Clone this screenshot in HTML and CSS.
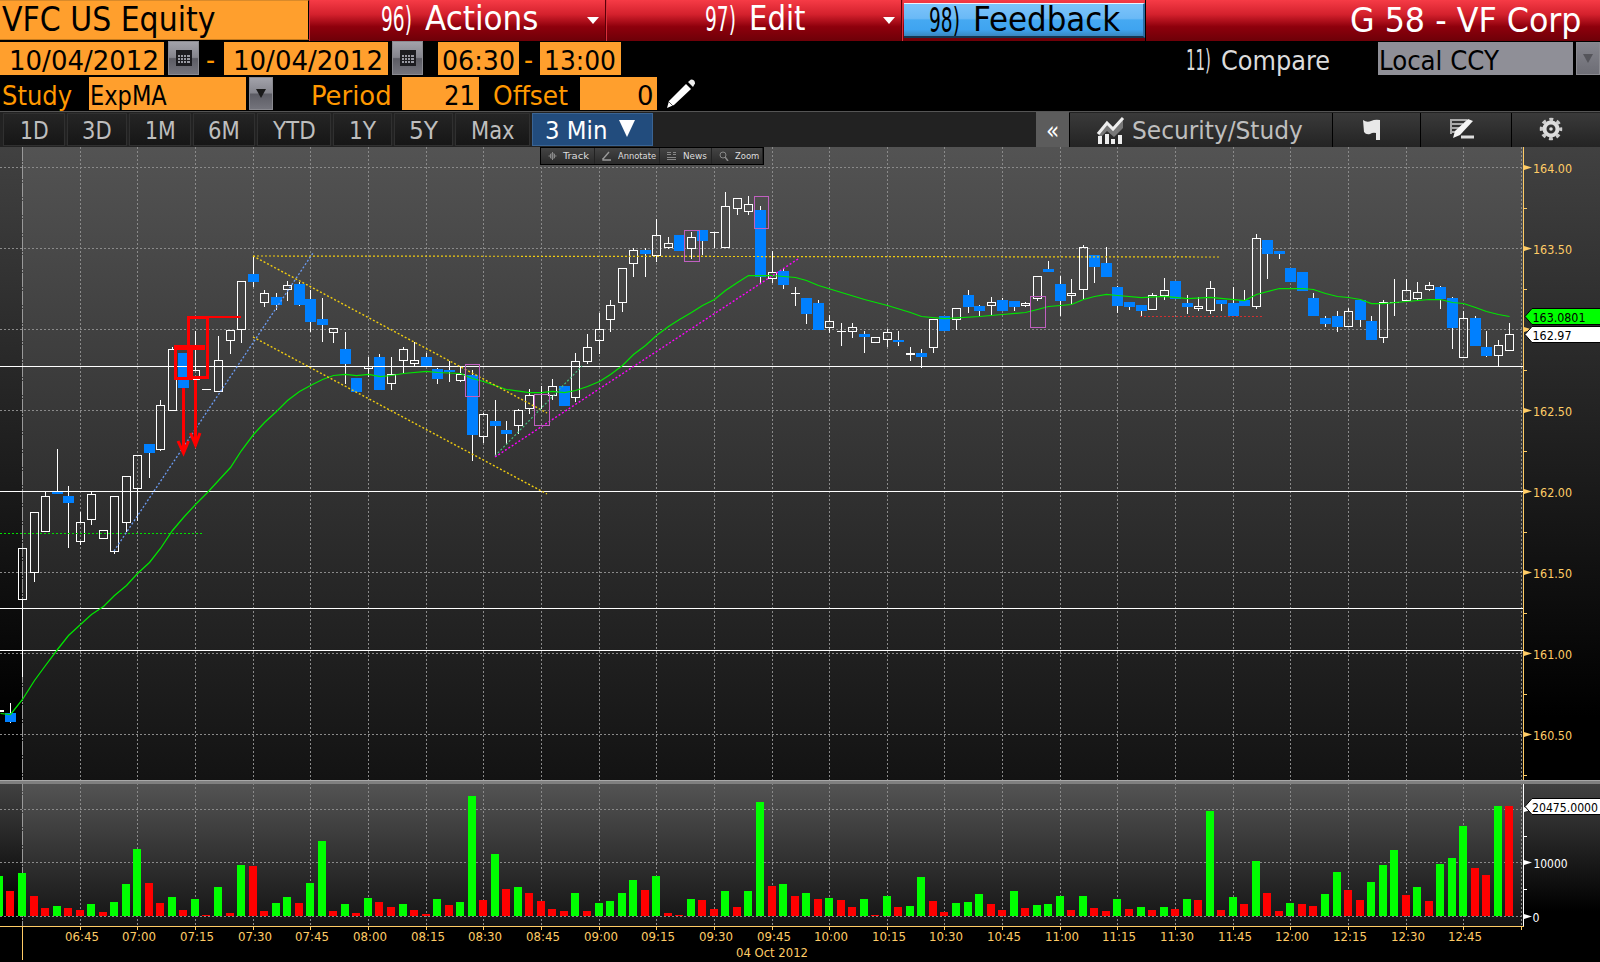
FILE: index.html
```html
<!DOCTYPE html>
<html lang="en">
<head>
    <meta charset="UTF-8">
    <title>VFC US Equity - G 58</title>
    <link rel="stylesheet" href="styles.css">
</head>
<body>
    <div class="title-row">
        <div class="security"><span class="fit" data-w="213">VFC US Equity</span></div>
        <div class="menu menu-actions">
            <span class="fit num" data-w="31">96)</span><span class="fit" data-w="113">Actions</span><i class="caret"></i>
        </div>
        <div class="menu menu-edit">
            <span class="fit num" data-w="31">97)</span><span class="fit" data-w="57">Edit</span><i class="caret"></i>
        </div>
        <div class="menu menu-feedback">
            <div class="feedback"><span class="fit num" data-w="31">98)</span><span class="fit" data-w="147">Feedback</span></div>
        </div>
        <div class="page-name"><span class="fit" data-w="232">G 58 - VF Corp</span></div>
    </div>

    <div class="form-row">
        <div class="field date"><span class="fit" data-w="150">10/04/2012</span></div>
        <div class="btn cal"><svg width="18" height="18"><use href="#cal"/></svg></div>
        <span class="dash">-</span>
        <div class="field date"><span class="fit" data-w="150">10/04/2012</span></div>
        <div class="btn cal"><svg width="18" height="18"><use href="#cal"/></svg></div>
        <div class="field time first"><span class="fit" data-w="73">06:30</span></div>
        <span class="dash small">-</span>
        <div class="field time"><span class="fit" data-w="72">13:00</span></div>
        <div class="compare"><span class="fit num" data-w="25">11)</span><span class="fit" data-w="109">Compare</span></div>
        <div class="field ccy"><span class="fit" data-w="120">Local CCY</span></div>
        <div class="btn ccy-drop"><i class="drop"></i></div>
    </div>

    <div class="form-row study-row">
        <span class="name"><span class="fit" data-w="70">Study</span></span>
        <div class="field study"><span class="fit" data-w="77">ExpMA</span></div>
        <div class="btn study-drop"><i class="drop"></i></div>
        <span class="name period-name"><span class="fit" data-w="81">Period</span></span>
        <div class="field number"><span class="fit" data-w="31">21</span></div>
        <span class="name offset-name"><span class="fit" data-w="75">Offset</span></span>
        <div class="field number"><span class="fit" data-w="16">0</span></div>
        <svg class="pencil" width="32" height="32" viewBox="0 0 32 32">
            <path d="M2 30l2-7L21 6l5 5L9 27z" fill="#fff"/>
            <path d="M23 4l3-2.500q4 0 4 4L28 9z" fill="#eee"/>
            <path d="M4 24l4 4" stroke="#555" stroke-width="1"/>
        </svg>
    </div>

    <div class="toolbar">
        <div class="range r1"><span class="fit" data-w="29">1D</span></div>
        <div class="range r2"><span class="fit" data-w="30">3D</span></div>
        <div class="range r3"><span class="fit" data-w="31">1M</span></div>
        <div class="range r4"><span class="fit" data-w="32">6M</span></div>
        <div class="range r5"><span class="fit" data-w="43">YTD</span></div>
        <div class="range r6"><span class="fit" data-w="27">1Y</span></div>
        <div class="range r7"><span class="fit" data-w="29">5Y</span></div>
        <div class="range r8"><span class="fit" data-w="44">Max</span></div>
        <div class="range active"><span class="fit" data-w="62">3 Min</span><i class="big-caret"></i></div>
        <div class="collapse">«</div>
        <div class="tool sec">
            <svg width="30" height="28" viewBox="0 0 30 28">
                <path d="M3 17L11 7l6 6L27 2v9l-9 9-7-6-7 7z" fill="#777"/>
                <path d="M2 17L11 6l6 6L27 1" fill="none" stroke="#eee" stroke-width="3"/>
                <path d="M4 19v8M11 17v10M17 22v5M24 18v9" stroke="#eee" stroke-width="4"/>
            </svg>
            <span class="fit" data-w="171">Security/Study</span>
        </div>
        <div class="tool flag">
            <svg width="22" height="24" viewBox="0 0 22 24">
                <path d="M2 2q4 3 8 1 4-2 9-1v20h-4v-7q-3-1-6 1-4 1-6-2z" fill="#e8e8e8"/>
            </svg>
        </div>
        <div class="tool note">
            <svg width="28" height="24" viewBox="0 0 28 24">
                <path d="M2 3h17M2 7h13M2 11h10M2 15h6M3 2v15" stroke="#aaa" stroke-width="2"/>
                <path d="M5 21l2-7L20 2l5 2-13 14z" fill="#f4f4f4"/>
                <path d="M13 20h13" stroke="#ddd" stroke-width="3"/>
            </svg>
        </div>
        <div class="tool gear">
            <svg width="24" height="24" viewBox="-12 -12 24 24">
                <circle r="6.500" fill="none" stroke="#ddd" stroke-width="4"/>
                <circle r="9.500" fill="none" stroke="#ccc" stroke-width="3.500" stroke-dasharray="3.900 3.560" stroke-dashoffset="1.950"/>
                <circle r="1.800" fill="#ddd"/>
            </svg>
        </div>
    </div>

    <div class="chart-wrap">
        <svg id="chart" width="1600" height="815" viewBox="0 147 1600 815">
            <defs>
                <linearGradient id="plotBg" x1="0" y1="0" x2="0" y2="1">
                    <stop offset="0" stop-color="#535353"/><stop offset="1" stop-color="#131313"/>
                </linearGradient>
                <linearGradient id="sideBg" x1="0" y1="0" x2="0" y2="1">
                    <stop offset="0" stop-color="#414141"/><stop offset="0.900" stop-color="#000"/>
                </linearGradient>
                <symbol id="cal" viewBox="0 0 18 18">
                    <path d="M1 1h16v16H1z" fill="#1c1c20"/>
                    <path d="M3 6h2v2H3zM6 6h2v2H6zM9 6h2v2H9zM12 6h3v2h-3zM3 9h2v2H3zM6 9h2v2H6zM9 9h2v2H9zM12 9h3v2h-3zM3 12h2v2H3zM6 12h2v2H6zM9 12h2v2H9zM12 12h3v2h-3z" fill="#999aa2"/>
                </symbol>
            </defs>
        </svg>
        <div class="mini-bar">
            <div class="mini m1">
                <svg width="9" height="10" viewBox="0 0 9 10"><path d="M4.500 1v8M0.500 5h8M2.500 3h4v4h-4z" fill="none" stroke="#888"/></svg>
                <span class="fit" data-w="26">Track</span>
            </div>
            <div class="mini m2">
                <svg width="10" height="10" viewBox="0 0 10 10"><path d="M1 8l6-7M3 9h6M1 7v2h2" fill="none" stroke="#999" stroke-width="1.400"/></svg>
                <span class="fit" data-w="38">Annotate</span>
            </div>
            <div class="mini m3">
                <svg width="10" height="10" viewBox="0 0 10 10"><path d="M0 1.500h4M0 3.500h4M6 1.500h3M6 3.500h3M0 6.500h9M0 8.500h9" stroke="#888"/></svg>
                <span class="fit" data-w="24">News</span>
            </div>
            <div class="mini m4">
                <svg width="10" height="10" viewBox="0 0 10 10"><circle cx="4" cy="4" r="3" fill="none" stroke="#888"/><path d="M6 6l3 4" stroke="#888" stroke-width="1.500"/></svg>
                <span class="fit" data-w="24">Zoom</span>
            </div>
        </div>
    </div>
    <script src="chart.js"></script>
</body>
</html>
```

FILE: styles.css
```css
* { box-sizing: border-box; }
body { margin: 0; width: 1600px; height: 962px; overflow: hidden; background: #000; font-family: "DejaVu Sans Condensed", "DejaVu Sans", sans-serif; font-stretch: condensed; }
.fit { display: inline-block; white-space: nowrap; flex: none; }
.fit b { display: inline-block; font-weight: normal; transform-origin: 0 50%; }

/* title row */
.title-row { display: flex; height: 41px; font-size: 33px; line-height: 38px; color: #fff; }
.security { width: 309px; height: 40px; padding: 0 0 0 2px; background: #ff9f2d; color: #000; border-top: 1px solid #d98a2a; border-bottom: 1px solid #c57a1e; border-right: 1px solid #000; }
.menu, .page-name { display: flex; height: 41px; background: linear-gradient(#f63b46, #d4212d 35%, #8e000c 65%, #6e0008); }
.menu { position: relative; border-right: 1px solid #5a0008; border-left: 1px solid #d8303b; }
.menu .num { margin-right: 13px; font-size: 34px; }
.menu-actions { width: 297px; padding-left: 71px; }
.menu-edit { width: 296px; padding-left: 98px; }
.menu-feedback { width: 244px; padding: 3px 0 0 1px; border-right: 1px solid #000; }
.feedback { display: flex; width: 241px; height: 35px; padding-left: 25px; line-height: 32px; color: #000; background: linear-gradient(#7cc4fa, #6ab9f6 45%, #45a9f2 50%, #3fa4f0 80%, #3a86be); border-top: 1px solid #e8f4ff; border-bottom: 2px solid #14344f; border-right: 2px solid #2c6ca0; }
.page-name { width: 454px; padding: 2px 18px 0 0; justify-content: flex-end; }
.caret { margin: 17px 6px 0 auto; width: 0; height: 0; border: 6px solid transparent; border-top: 7px solid #fff; border-bottom: 0; }

/* date and study rows */
.form-row { display: flex; height: 35px; padding-top: 1px; font-size: 27px; line-height: 37px; color: #000; }
.field { display: flex; height: 33px; background: #ff9f2d; }
.date { width: 164px; padding-left: 9px; }
.btn { display: flex; align-items: center; justify-content: center; height: 34px; background: linear-gradient(#a2a2aa, #85858d 48%, #5c5c64 52%, #74747c); border: 1px solid #8a8a90; }
.cal { width: 31px; margin: -1px 0 0 4px; }
.dash { width: 25px; padding-left: 7px; color: #ff9800; font-size: 28px; }
.dash.small { width: 21px; padding-left: 5px; }
.time { width: 81px; padding-left: 4px; }
.time.first { margin-left: 15px; }
.compare { display: flex; width: 192px; margin-left: 565px; color: #dcdcdc; }
.compare .num { margin-right: 10px; font-size: 28px; }
.ccy { width: 195px; padding-left: 1px; background: #8f8f97; }
.ccy-drop { width: 24px; height: 33px; margin-left: 3px; background: linear-gradient(#85858d, #6d6d75); }
.drop { width: 0; height: 0; border: 5px solid transparent; border-top: 9px solid #1a1a1a; border-bottom: 0; }
.ccy-drop .drop { border-top-color: #55555b; }
.name { display: flex; width: 89px; padding-left: 2px; color: #ff9800; }
.study { width: 157px; padding-left: 1px; }
.study-drop { width: 24px; height: 33px; margin-left: 3px; }
.period-name { width: 91px; margin-left: 38px; padding-left: 0; }
.number { width: 77px; padding-right: 4px; justify-content: flex-end; }
.offset-name { width: 87px; margin-left: 14px; padding-left: 0; }
.pencil { margin: 1px 0 0 8px; }

/* range toolbar */
.toolbar { display: flex; height: 36px; padding: 1px 0 0 3px; background: #222; border-top: 1px solid #555; font-size: 25px; line-height: 33px; color: #bebebe; }
.range { display: flex; justify-content: center; height: 33px; margin-right: 2px; background: linear-gradient(#252525, #161616); border: 1px solid #303030; }
.r1 { width: 62px; }
.r2 { width: 60px; }
.r3 { width: 62px; }
.r4 { width: 62px; }
.r5 { width: 74px; }
.r6 { width: 59px; }
.r7 { width: 59px; }
.r8 { width: 75px; }
.active { width: 121px; justify-content: flex-start; padding-left: 12px; background: #224c7d; border-color: #3a6494; color: #fff; }
.big-caret { margin: 6px 0 0 12px; width: 0; height: 0; border: 8px solid transparent; border-top: 17px solid #fff; border-bottom: 0; }
.collapse { width: 33px; height: 36px; margin: -1px 0 0 auto; padding-top: 3px; background: #5c5c5c; color: #fff; text-align: center; font-size: 24px; }
.tool { display: flex; align-items: center; justify-content: center; height: 35px; background: linear-gradient(#3a3a3a, #232323); border-left: 1px solid #000; }
.sec { width: 263px; justify-content: flex-start; padding-left: 26px; }
.sec .fit { margin-left: 6px; }
.flag { width: 88px; padding: 0 10px 2px 0; }
.note { width: 91px; padding: 0 8px 3px 0; }
.gear { width: 89px; padding: 0 10px 3px 0; }

/* chart */
.chart-wrap { position: relative; height: 815px; }
#chart { display: block; }
#chart text { font-size: 13px; }
.mini-bar { position: absolute; left: 540px; top: 0; display: flex; width: 224px; height: 18px; padding: 1px; background: #000; font-size: 9px; line-height: 15px; color: #ddd; }
.mini { display: flex; align-items: center; height: 16px; background: linear-gradient(#444, #2a2a2a); border-right: 1px solid #222; padding-left: 7px; }
.mini .fit { margin-left: 6px; }
.m1 { width: 54px; }
.m2 { width: 65px; }
.m3 { width: 52px; }
.m4 { width: 51px; }
```

FILE: chart.js
```js
const NS = "http://www.w3.org/2000/svg";
const chart = document.getElementById("chart");

function add(tag, attrs, text) {
    const el = document.createElementNS(NS, tag);
    for (const k in attrs) el.setAttribute(k, attrs[k]);
    if (text) el.textContent = text;
    chart.appendChild(el);
    return el;
}
function rect(x, y, w, h, fill) { add("rect", { x, y, width: w, height: h, fill }); }
function line(x1, y1, x2, y2, stroke, dash, w) {
    add("line", { x1, y1, x2, y2, stroke, "stroke-width": w || 1, "stroke-dasharray": dash || "none" });
}
function label(x, y, w, text, fill) {
    add("text", { x, y, fill, textLength: w, lengthAdjust: "spacingAndGlyphs" }, text);
}
function barX(i) { return Math.round(22 + 11.531 * i); }

// [colour, high, body top, body bottom, low], one per 3 minutes from 06:27
const candles = [
    ["b",703,713,722,723],["w",548,548,600,677],["w",512,512,573,582],["w",492,496,532,532],["b",449,492,494,494],
    ["b",486,496,503,548],["w",512,522,542,545],["w",492,494,520,525],["w",530,530,539,539],["w",496,496,552,554],
    ["w",476,476,523,532],["w",455,455,489,521],["b",444,444,453,478],["w",400,405,450,451],["w",347,349,411,411],
    ["b",353,353,388,388],["w",331,370,380,380],["w",389,389,390,390],["w",336,360,392,392],["w",330,330,341,354],
    ["w",281,281,330,343],["b",256,274,282,287],["w",290,293,303,307],["b",293,297,305,310],["w",281,285,290,301],
    ["b",282,284,305,306],["b",290,299,322,332],["b",298,319,325,342],["w",328,328,333,343],["b",332,349,364,384],
    ["b",378,378,392,392],["w",357,366,369,377],["b",354,357,390,390],["w",357,374,384,390],["w",347,349,361,374],
    ["w",342,360,364,366],["b",353,357,366,366],["b",368,369,379,384],["b",361,370,372,382],["w",366,374,381,382],
    ["b",370,375,435,461],["w",413,414,437,443],["b",400,421,426,456],["b",421,430,434,444],["w",409,410,426,434],
    ["w",389,395,409,414],["w",386,394,395,409],["w",379,386,396,400],["b",386,386,406,406],["w",353,361,398,402],
    ["w",334,347,362,364],["w",313,329,341,354],["w",300,305,320,332],["w",268,268,303,312],["w",248,250,264,277],
    ["b",248,250,254,277],["w",219,235,256,262],["w",237,243,248,249],["b",235,235,251,251],["w",232,237,249,259],
    ["b",230,230,241,255],["w",232,232,233,248],["w",192,206,248,248],["w",198,198,209,215],["w",196,204,212,215],
    ["b",206,210,277,283],["w",251,272,279,283],["b",269,271,285,289],["w",287,293,294,306],["b",298,298,314,324],
    ["b",300,303,330,330],["w",315,321,328,333],["w",323,331,332,346],["w",323,327,332,338],["b",331,334,337,353],
    ["w",337,337,343,343],["w",329,332,340,347],["b",331,340,342,346],["w",347,353,355,361],["b",349,353,357,368],
    ["w",319,319,348,353],["b",316,316,331,331],["w",308,308,320,330],["b",290,295,307,313],["b",305,306,311,316],
    ["w",297,302,306,316],["b",298,300,311,311],["b",301,301,307,311],["w",302,303,306,307],["w",276,276,299,301],
    ["b",261,269,272,272],["b",276,284,301,316],["w",279,293,296,304],["w",245,247,290,299],["b",255,255,267,283],
    ["b",247,263,277,277],["b",286,287,306,313],["b",302,302,307,310],["b",305,305,311,316],["w",293,295,310,310],
    ["w",278,290,296,300],["b",281,281,299,299],["b",295,303,307,314],["w",297,306,309,311],["w",281,288,311,314],
    ["b",300,300,304,311],["b",287,303,316,316],["b",290,300,306,306],["w",234,238,307,309],["b",240,240,254,279],
    ["b",251,251,254,259],["b",268,268,282,282],["b",272,272,291,291],["b",293,298,316,316],["b",316,318,324,327],
    ["b",311,316,327,332],["w",308,311,327,327],["b",300,300,320,327],["b",316,321,340,340],["w",300,302,338,343],
    ["w",279,302,303,316],["w",279,290,301,301],["w",282,292,299,301],["w",282,285,290,291],["b",286,287,299,309],
    ["b",297,298,328,349],["w",311,318,358,358],["b",316,318,346,346],["b",331,347,356,357],["w",340,345,356,366],
    ["w",323,334,351,351]
];

// volume bars from 06:24, height in pixels, r = down bar
const volume = ("g40 r25 g43 r20 r8 g10 r8 r6 g12 r4 g14 g32 g67 r33 r13 g19 r6 g17 r1 g29 r3 g51 r50 r5 g13 g19 r13 g33 g75 r5 g12 r3 " +
    "g18 r14 r9 g12 r6 r2 g17 r11 g14 g120 r16 g62 r27 g29 r23 r15 r7 r5 g23 r5 g13 g15 g23 g36 r26 g40 r3 r1 g17 r16 r7 g25 r9 g25 " +
    "g114 r30 g32 r20 g23 r17 g18 r16 r9 g17 r1 g20 r9 g10 g39 r15 r4 g13 g14 g22 r12 r6 g25 r8 g11 g12 g20 r6 g20 r8 r5 g17 r7 g9 " +
    "r6 g9 r7 g17 r16 g105 r6 g19 r12 g55 r23 r5 g13 r12 r10 g22 g44 r26 r16 g34 g51 g66 r21 g29 r15 g52 g58 g90 r48 r41 g110 r110").split(" ");

const ema = "0,713 10,714 22,699 34,680 45,665 57,649 68,635 80,624 91,614 103,606 114,595 126,585 137,573 149,562 160,548 172,530 183,517 195,504 207,492 218,480 230,467 241,450 253,434 264,422 276,411 287,400 299,391 310,385 322,379 333,375 345,374 356,375 368,374 380,376 391,375 403,373 426,371 437,372 460,373 472,378 483,381 506,389 529,392 541,392 552,391 564,392 575,390 587,386 599,381 610,374 622,365 633,354 645,345 656,335 668,326 679,319 691,312 702,305 714,299 725,290 737,282 748,275 772,275 795,277 806,280 818,285 841,292 864,299 887,305 910,312 921,316 944,318 979,316 1002,314 1025,312 1037,309 1048,306 1060,305 1071,304 1083,299 1094,296 1106,294 1117,295 1141,297 1164,296 1187,298 1210,297 1244,300 1256,294 1279,288 1302,288 1313,289 1325,293 1337,296 1348,297 1360,299 1371,303 1383,303 1406,301 1429,299 1440,299 1452,302 1463,303 1475,307 1486,311 1498,314 1509,316";

const GRID = "#8a8a8a";
const AMBER = "#ffcc66";

// backgrounds
rect(0, 147, 1600, 633, "url(#sideBg)");
rect(22, 147, 1501, 633, "url(#plotBg)");
rect(0, 784, 1600, 142, "url(#sideBg)");
rect(22, 784, 1501, 142, "url(#plotBg)");

// grid
for (let y = 167; y < 780; y += 81) line(0, y + 0.5, 1523, y + 0.5, GRID, "2 2");
[809, 862, 916].forEach(y => line(0, y + 0.5, 1523, y + 0.5, GRID, "2 2"));
for (let i = 5; i <= 130; i += 5) {
    line(barX(i) + 0.5, 147, barX(i) + 0.5, 926, GRID, "2 2");
}
line(22.5, 147, 22.5, 926, "#999", "14 1 2 1");
rect(0, 780, 1600, 4, "#808080");
rect(0, 780, 1600, 1, "#a8a8a8");

// volume
volume.forEach((v, n) => {
    const h = Number(v.slice(1));
    rect(barX(n - 2) - 4, 916 - h, 8, h, v[0] === "g" ? "#00ff00" : "#ff0000");
});

// candles
rect(0, 710, 4, 2, "#fff");
candles.forEach(([c, hi, top, bot, lo], n) => {
    const x = barX(n - 1);
    if (c === "b") {
        rect(x, hi, 1, lo - hi, "#fff");
        rect(x - 5, top, 11, bot - top, "#0080ff");
        return;
    }
    rect(x, hi, 1, top - hi, "#fff");
    rect(x, bot, 1, lo - bot, "#fff");
    if (bot - top < 3) rect(x - 4, top, 9, bot - top, "#fff");
    else add("rect", { x: x - 3.5, y: top + 0.5, width: 8, height: bot - top - 1, fill: "none", stroke: "#fff" });
});

// support levels
[366, 491, 608, 650].forEach(y => rect(0, y, 1523, 1, "#fff"));
line(0, 533.5, 202, 533.5, "#00e000", "2 2");
add("polyline", { points: ema, fill: "none", stroke: "#00e600", "stroke-width": 1.25, transform: "translate(0.5 0.5)" });

// trend lines
line(253, 256, 1219, 257, "#f0cc10", "2 2", 1.2);
line(253, 256, 547, 413, "#f0cc10", "2 2", 1.4);
line(253, 337, 547, 494, "#f0cc10", "2 2", 1.4);
line(114, 551, 313, 253, "#6c9cf4", "2 2", 1.3);
line(495, 456, 582, 366, "#48c080", "2 2", 1.2);
line(495, 457, 798, 259, "#ff00ff", "2 2", 1.4);
line(1140, 316.5, 1262, 316.5, "#d03030", "2 2");

// purple boxes
[[465,364,15,33],[534,394,16,32],[684,230,16,32],[754,196,15,33],[1030,296,16,32]].forEach(b =>
    add("rect", { x: b[0] + 0.5, y: b[1] + 0.5, width: b[2] - 1, height: b[3] - 1, fill: "none", stroke: "#c060c0" }));

// red marks
add("path", {
    d: "M175.500 346.500H191.500V378.500H175.500ZM188.500 317.500H207.500V377.500H188.500ZM183.500 388V452M195.500 380V446M178 441l5.500 12 5-12M190.500 433l5 12 4.500-12",
    fill: "none", stroke: "#ff0000", "stroke-width": 3
});
rect(174, 345, 31, 5, "#ff0000");
rect(187, 316, 54, 2, "#ff0000");

// axes
rect(1523, 147, 1, 633, AMBER);
rect(1523, 784, 1, 142, "#fff");
rect(0, 926, 1524, 1, AMBER);
rect(22, 926, 1, 34, AMBER);
let price = 164;
for (let y = 167; y < 780; y += 81) {
    add("path", { d: `M1524 ${y - 2}l8 2.500-8 2.500z`, fill: AMBER });
    rect(1524, y + 41, 3, 1, AMBER);
    if (y !== 329) label(1533, y + 6, 39, price.toFixed(2), AMBER);
    price -= 0.5;
}
[809, 862, 916].forEach(y => add("path", { d: `M1524 ${y - 2}l8 2.500-8 2.500z`, fill: "#fff" }));
[836, 889].forEach(y => rect(1524, y, 3, 1, "#fff"));
label(1533.5, 868, 34, "10000", "#fff");
label(1532.5, 922, 7, "0", "#fff");

function tag(y, h, fill, text, w, ty, tx) {
    add("path", { d: `M1525 ${y + h / 2}L1532 ${y + 0.5}H1602V${y + h - 0.5}H1532Z`, fill, stroke: "#000" });
    label(tx, ty, w, text, "#000");
}
tag(308, 17, "#00ff00", "163.0801", 53, 322, 1532.5);
tag(326, 17, "#ffffff", "162.97", 39, 340, 1532.5);
tag(798, 17, "#ffffff", "20475.0000", 66, 812, 1532);

for (let i = 5; i <= 130; i += 5) {
    rect(barX(i), 926, 1, 4, AMBER);
    if (i === 130) break;
    const m = 390 + i * 3;
    const t = String(Math.floor(m / 60)).padStart(2, "0") + ":" + String(m % 60).padStart(2, "0");
    label(barX(i) - 15, 941, 34, t, AMBER);
}
label(736, 957, 72, "04 Oct 2012", AMBER);

// squeeze the terminal labels to their column width
document.querySelectorAll(".fit").forEach(el => {
    el.innerHTML = "<b>" + el.textContent + "</b>";
    const w = Number(el.dataset.w);
    const b = el.firstChild;
    b.style.transform = "scaleX(" + w / b.offsetWidth + ")";
    el.style.width = w + "px";
});
```
